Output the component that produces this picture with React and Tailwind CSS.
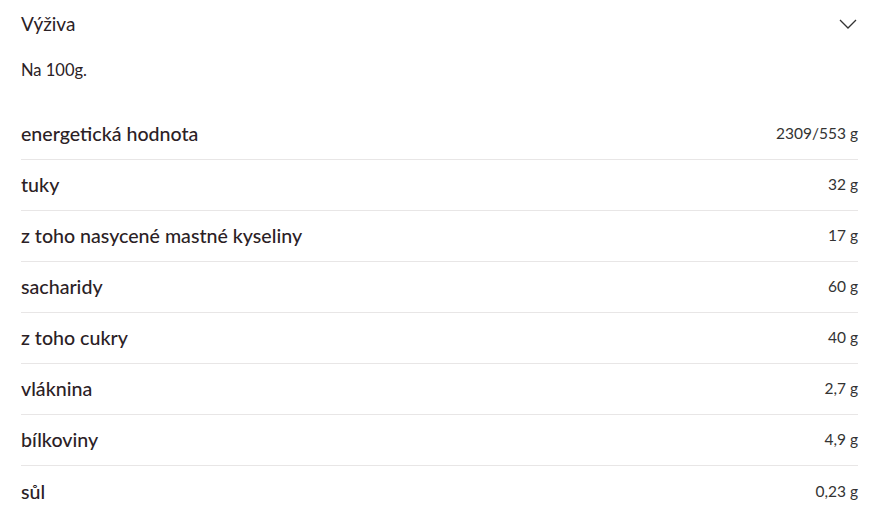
const rows = [
  ["energetická hodnota", "2309/553 g"],
  ["tuky", "32 g"],
  ["z toho nasycené mastné kyseliny", "17 g"],
  ["sacharidy", "60 g"],
  ["z toho cukry", "40 g"],
  ["vláknina", "2,7 g"],
  ["bílkoviny", "4,9 g"],
  ["sůl", "0,23 g"],
];

export default function App() {
  return (
    <div className="w-[877px] h-[523px] overflow-hidden bg-white pl-[21px] pr-[19px] font-['Lato',sans-serif] text-[#2b2125]">
      <div className="flex items-center justify-between h-[48px]">
        <span className="text-[19px]">Výživa</span>
        <svg width="18" height="10" viewBox="0 0 18 10" fill="none" stroke="#333" strokeWidth="1.3" className="mr-[1px]">
          <path d="M1 1l8 8 8-8" />
        </svg>
      </div>
      <div className="h-[61px] pt-[12px] text-[16.5px] leading-[20px]">Na 100g.</div>
      {rows.map(([label, value], i) => (
        <div
          key={label}
          className={
            "flex items-center justify-between h-[51px] " +
            (i < rows.length - 1 ? "border-b border-[#e8e6e6]" : "")
          }
        >
          <span className="text-[19.6px] font-medium">{label}</span>
          <span className="text-[15.5px] text-[#333]">{value}</span>
        </div>
      ))}
    </div>
  );
}
